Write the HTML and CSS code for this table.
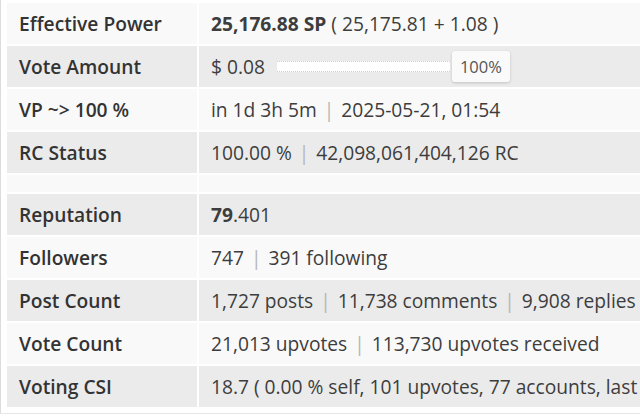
FILE: index.html
```html
<!DOCTYPE html>
<html>
<head>
<meta charset="utf-8">
<link rel="stylesheet" href="styles.css">
</head>
<body>
<div class="card">
  <table class="stats">
    <tbody>
      <tr class="odd"><th>Effective Power</th><td><b>25,176.88 SP</b> ( 25,175.81 + 1.08 )</td></tr>
      <tr class="even"><th>Vote Amount</th><td><div class="vote"><span>$ 0.08</span><div class="slider"><div class="track"></div><div class="thumb">100%</div></div></div></td></tr>
      <tr class="odd"><th>VP ~&gt; 100 %</th><td>in 1d 3h 5m <span class="sep">|</span> 2025-05-21, 01:54</td></tr>
      <tr class="even"><th>RC Status</th><td>100.00 % <span class="sep">|</span> 42,098,061,404,126 RC</td></tr>
      <tr class="odd spacer"><th></th><td></td></tr>
      <tr class="even"><th>Reputation</th><td><b>79</b>.401</td></tr>
      <tr class="odd"><th>Followers</th><td>747 <span class="sep">|</span> 391 following</td></tr>
      <tr class="even"><th>Post Count</th><td>1,727 posts <span class="sep">|</span> 11,738 comments <span class="sep">|</span> 9,908 replies</td></tr>
      <tr class="odd"><th>Vote Count</th><td>21,013 upvotes <span class="sep">|</span> 113,730 upvotes received</td></tr>
      <tr class="even"><th>Voting CSI</th><td>18.7 ( 0.00 % self, 101 upvotes, 77 accounts, last 7d )</td></tr>
    </tbody>
  </table>
</div>
</body>
</html>
```
FILE: styles.css
```css
html, body {
  margin: 0;
  padding: 0;
  background: #ffffff;
}
body {
  width: 640px;
  height: 420px;
  overflow: hidden;
  font-family: "Open Sans", "Noto Sans", sans-serif;
  color: #3a3a3a;
}
.card {
  border-left: 1px solid #dcdcdc;
  border-bottom: 1px solid #e6e6e6;
  padding: 1px 0 4px 4px;
  width: 760px;
}
.stats {
  border-collapse: separate;
  border-spacing: 2px 2.75px;
  font-size: 19.2px;
  white-space: nowrap;
}
.stats th {
  width: 166px;
  text-align: left;
  font-weight: 600;
  padding: 0 12px;
  height: 41px;
  color: #333;
}
.stats td {
  width: 520px;
  padding: 0 12px;
  height: 41px;
  color: #3d3d3d;
}
.stats b {
  font-weight: 700;
}
.odd th, .odd td {
  background: #f9f9f9;
}
.even th, .even td {
  background: #ebebeb;
}
.spacer th, .spacer td {
  height: 17px;
  padding: 0;
}
.sep {
  color: #b5b5b5;
  padding: 0 2px;
}
.vote {
  display: flex;
  align-items: center;
  gap: 12px;
}
.slider {
  display: flex;
  align-items: center;
}
.track {
  width: 173px;
  height: 9px;
  background: #ffffff;
  border-top: 1px dotted #cfcfcf;
  border-bottom: 1px dotted #cfcfcf;
}
.thumb {
  margin-left: 2px;
  background: #fafafa;
  border-radius: 3px;
  box-shadow: 0 1px 3px rgba(0,0,0,0.18);
  font-size: 16.5px;
  color: #555;
  padding: 5px 8px;
  line-height: 21px;
}
```
